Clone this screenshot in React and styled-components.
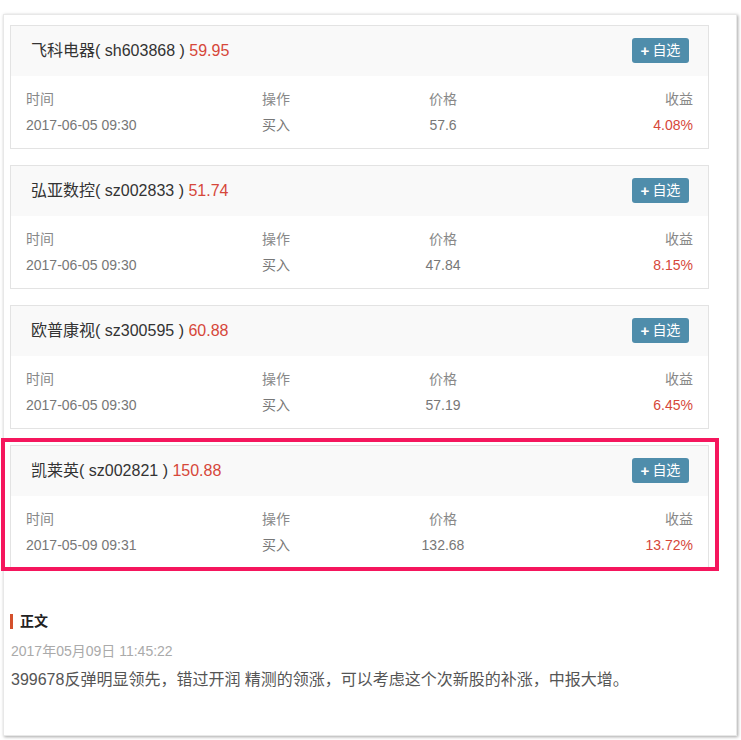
import React from "react";
import styled, { createGlobalStyle } from "styled-components";

const Global = createGlobalStyle`
  html, body { margin: 0; padding: 0; background: #fff; }
  body { font-family: "Liberation Sans", Arial, "Noto Sans CJK SC", sans-serif; }
`;

const Page = styled.div`
  width: 741px;
  height: 740px;
  padding: 14px 4px 0 3px;
  box-sizing: border-box;
`;

const Panel = styled.div`
  width: 734px;
  height: 722px;
  box-sizing: border-box;
  border: 1px solid #e8e8e8;
  box-shadow: 1px 1px 3px rgba(0, 0, 0, 0.35);
  padding: 10px 0 0 6px;
  display: flex;
  flex-direction: column;
`;

const CardList = styled.div`
  display: flex;
  flex-direction: column;
  gap: 16px;
  width: 699px;
`;

const Card = styled.div`
  position: relative;
  border: 1px solid #e3e3e3;
  background: #fff;
  ${(p) =>
    p.$highlight &&
    `
    &::after {
      content: "";
      position: absolute;
      top: -8px; left: -10px; right: -11px; bottom: -3px;
      border: 4px solid #f5165d;
      pointer-events: none;
    }
  `}
`;

const CardHead = styled.div`
  display: flex;
  align-items: center;
  justify-content: space-between;
  background: #f9f9f9;
  padding: 12px 19px 13px 20px;
  height: 25px;
`;

const Title = styled.div`
  font-size: 16px;
  color: #333;
  line-height: 25px;
  white-space: pre;
`;

const Price = styled.span`
  color: #d6473a;
`;

const AddButton = styled.div`
  width: 57px;
  height: 25px;
  border-radius: 3px;
  background: #4f8dab;
  color: #fff;
  font-size: 14px;
  display: flex;
  align-items: center;
  justify-content: center;
  gap: 3px;
  line-height: 25px;
`;

const Plus = styled.span`
  font-weight: bold;
  font-size: 15px;
`;

const CardBody = styled.div`
  display: grid;
  grid-template-columns: 236px 120px 122px 1fr;
  padding: 10px 15px;
  font-size: 14px;
  line-height: 26px;
`;

const Cell = styled.div`
  color: ${(p) => (p.$red ? "#d6473a" : p.$label ? "#888" : "#777")};
  text-align: ${(p) => p.$align || "left"};
`;

const Article = styled.div`
  padding: 42px 0 0 0;
  display: flex;
  flex-direction: column;
`;

const SectionTitle = styled.div`
  display: flex;
  align-items: center;
  gap: 7px;
  font-size: 14px;
  font-weight: bold;
  color: #222;
  line-height: 20px;
`;

const Bar = styled.span`
  width: 3px;
  height: 15px;
  background: #d4502c;
`;

const DateLine = styled.div`
  margin-top: 8px;
  font-size: 14px;
  color: #aaa;
  line-height: 24px;
  padding-left: 1px;
`;

const Body = styled.div`
  margin-top: 3px;
  font-size: 16px;
  color: #555;
  line-height: 28px;
  padding-left: 1px;
`;

const stocks = [
  { name: "飞科电器", code: "sh603868", price: "59.95", time: "2017-06-05 09:30", op: "买入", cost: "57.6", gain: "4.08%" },
  { name: "弘亚数控", code: "sz002833", price: "51.74", time: "2017-06-05 09:30", op: "买入", cost: "47.84", gain: "8.15%" },
  { name: "欧普康视", code: "sz300595", price: "60.88", time: "2017-06-05 09:30", op: "买入", cost: "57.19", gain: "6.45%" },
  { name: "凯莱英", code: "sz002821", price: "150.88", time: "2017-05-09 09:31", op: "买入", cost: "132.68", gain: "13.72%", hl: true },
];

export default function App() {
  return (
    <>
      <Global />
      <Page>
        <Panel>
          <CardList>
            {stocks.map((s) => (
              <Card key={s.code} $highlight={s.hl}>
                <CardHead>
                  <Title>
                    {s.name}( {s.code} ) <Price>{s.price}</Price>
                  </Title>
                  <AddButton>
                    <Plus>+</Plus>自选
                  </AddButton>
                </CardHead>
                <CardBody>
                  <Cell $label>时间</Cell>
                  <Cell $label>操作</Cell>
                  <Cell $label $align="center">价格</Cell>
                  <Cell $label $align="right">收益</Cell>
                  <Cell>{s.time}</Cell>
                  <Cell>{s.op}</Cell>
                  <Cell $align="center">{s.cost}</Cell>
                  <Cell $red $align="right">{s.gain}</Cell>
                </CardBody>
              </Card>
            ))}
          </CardList>
          <Article>
            <SectionTitle>
              <Bar />
              正文
            </SectionTitle>
            <DateLine>2017年05月09日 11:45:22</DateLine>
            <Body>399678反弹明显领先，错过开润 精测的领涨，可以考虑这个次新股的补涨，中报大增。</Body>
          </Article>
        </Panel>
      </Page>
    </>
  );
}
